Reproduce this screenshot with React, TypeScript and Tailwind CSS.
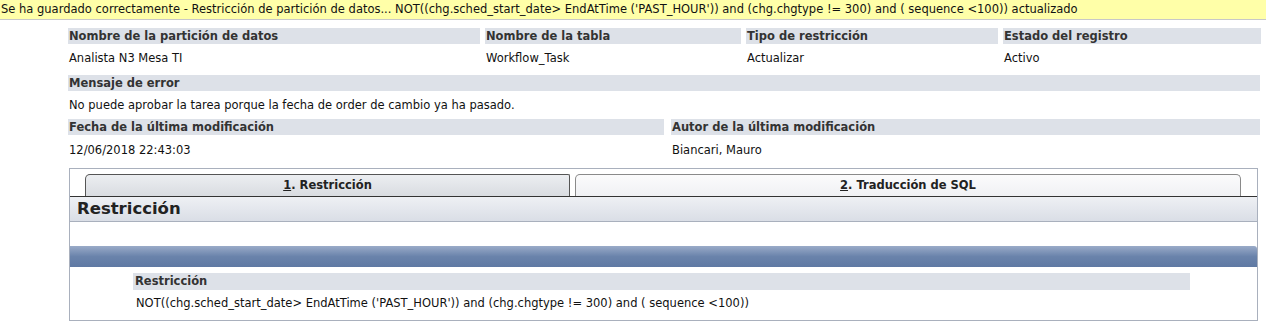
import React from "react";

const font = { fontFamily: '"DejaVu Sans", Verdana, sans-serif' };

function Label({ children }: { children: React.ReactNode }) {
  return (
    <div className="h-[16px] bg-[#dde1e8] pl-[1px] text-[11.5px] font-bold leading-[16px] text-[#333333] whitespace-nowrap overflow-hidden">
      {children}
    </div>
  );
}

function Value({ children, h }: { children: React.ReactNode; h: string }) {
  return (
    <div className={`${h} pl-[1px] text-[11.5px] leading-[15px] text-[#111111] whitespace-nowrap`}>
      {children}
    </div>
  );
}

export default function App() {
  return (
    <div className="w-[1266px] h-[329px] bg-white overflow-hidden" style={font}>
      <div className="h-[20px] bg-[#ffffa8] border-b border-[#c8c8c8] pl-[1px] text-[11.5px] leading-[18px] text-[#111111] whitespace-nowrap">
        Se ha guardado correctamente - Restricción de partición de datos... NOT((chg.sched_start_date&gt; EndAtTime ('PAST_HOUR')) and (chg.chgtype != 300) and ( sequence &lt;100)) actualizado
      </div>

      <div className="pl-[68px] pt-[8px]">
        <div className="grid grid-cols-[412px_256px_252px_258px] gap-x-[5px]">
          <Label>Nombre de la partición de datos</Label>
          <Label>Nombre de la tabla</Label>
          <Label>Tipo de restricción</Label>
          <Label>Estado del registro</Label>
          <Value h="h-[31px] pt-[7px]">Analista N3 Mesa TI</Value>
          <Value h="h-[31px] pt-[7px]">Workflow_Task</Value>
          <Value h="h-[31px] pt-[7px]">Actualizar</Value>
          <Value h="h-[31px] pt-[7px]">Activo</Value>
        </div>
        <div className="w-[1192px]">
          <Label>Mensaje de error</Label>
          <Value h="h-[28px] pt-[7px]">No puede aprobar la tarea porque la fecha de order de cambio ya ha pasado.</Value>
        </div>
        <div className="grid grid-cols-[596px_589px] gap-x-[7px]">
          <Label>Fecha de la última modificación</Label>
          <Label>Autor de la última modificación</Label>
          <Value h="h-[33px] pt-[8px]">12/06/2018 22:43:03</Value>
          <Value h="h-[33px] pt-[8px]">Biancari, Mauro</Value>
        </div>
      </div>

      <div className="ml-[69px] w-[1189px] h-[153px] border border-[#a9b0bd] flex flex-col">
        <div className="h-[28px] pt-[5px] flex items-end border-b border-[#333333]">
          <div className="ml-[15px] w-[485px] h-[22px] rounded-tl-[5px] rounded-tr-[2px] border border-b-0 border-[#555555] bg-gradient-to-b from-[#eceef1] to-[#d9dce1] flex items-center justify-center text-[11.5px] font-bold text-[#222222]">
            <span><span className="underline">1</span>. Restricción</span>
          </div>
          <div className="ml-[5px] w-[666px] h-[22px] rounded-tl-[5px] rounded-tr-[5px] border border-b-0 border-[#8a8a8a] bg-gradient-to-b from-[#fbfbfc] to-[#f0f1f4] flex items-center justify-center text-[11.5px] font-bold text-[#222222]">
            <span><span className="underline">2</span>. Traducción de SQL</span>
          </div>
        </div>
        <div className="h-[25px] bg-gradient-to-b from-[#eef0f4] to-[#dadee6] border-b border-[#a9b0bd] pl-[7px] text-[16.5px] font-bold leading-[24px] text-[#222222]">
          Restricción
        </div>
        <div className="h-[24px]" />
        <div className="h-[21px] rounded-tr-[3px] bg-gradient-to-b from-[#9aabc8] via-[#6a83ab] to-[#5f79a3]" />
        <div className="pl-[63px] pt-[6px]">
          <div className="w-[1057px] h-[17px] bg-[#dde1e8] pl-[2px] text-[11.5px] font-bold leading-[17px] text-[#333333]">
            Restricción
          </div>
          <div className="pl-[3px] pt-[6px] text-[11.5px] leading-[15px] text-[#111111] whitespace-nowrap">
            NOT((chg.sched_start_date&gt; EndAtTime ('PAST_HOUR')) and (chg.chgtype != 300) and ( sequence &lt;100))
          </div>
        </div>
      </div>
    </div>
  );
}
